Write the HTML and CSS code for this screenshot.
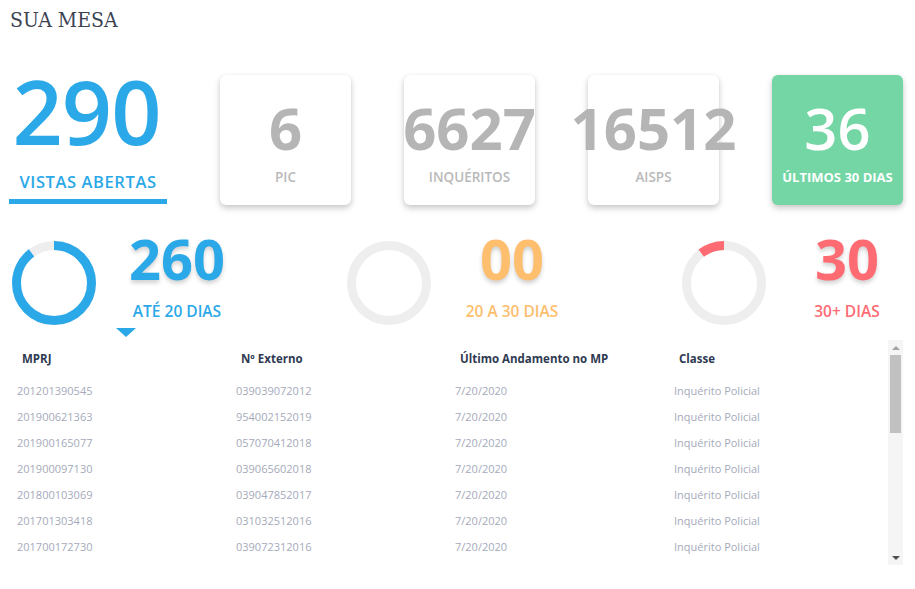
FILE: index.html
```html
<!DOCTYPE html>
<html lang="pt-BR">
<head>
<meta charset="utf-8">
<title>Sua Mesa</title>
<link rel="stylesheet" href="styles.css">
</head>
<body>
<div class="page">
  <h1 class="title">SUA MESA</h1>

  <div class="top">
    <div class="hero">
      <div class="hero-num">290</div>
      <div class="hero-label">VISTAS ABERTAS</div>
      <div class="hero-bar"></div>
    </div>
    <div class="cards">
      <div class="card"><div class="card-num">6</div><div class="card-label">PIC</div></div>
      <div class="card"><div class="card-num">6627</div><div class="card-label">INQUÉRITOS</div></div>
      <div class="card"><div class="card-num">16512</div><div class="card-label">AISPS</div></div>
      <div class="card card-green"><div class="card-num">36</div><div class="card-label">ÚLTIMOS 30 DIAS</div></div>
    </div>
  </div>

  <div class="stats">
    <div class="stat stat-blue">
      <svg class="donut" viewBox="0 0 84 84" width="84" height="84">
        <circle class="ring-bg" cx="42" cy="42" r="37.5"/>
        <circle class="ring-val" cx="42" cy="42" r="37.5" stroke-dasharray="211.2 235.6" transform="rotate(-90 42 42)"/>
      </svg>
      <div class="stat-text">
        <div class="stat-num">260</div>
        <div class="stat-label">ATÉ 20 DIAS</div>
        <div class="stat-arrow"></div>
      </div>
    </div>
    <div class="stat stat-orange">
      <svg class="donut" viewBox="0 0 84 84" width="84" height="84">
        <circle class="ring-bg" cx="42" cy="42" r="37.5"/>
      </svg>
      <div class="stat-text">
        <div class="stat-num">00</div>
        <div class="stat-label">20 A 30 DIAS</div>
      </div>
    </div>
    <div class="stat stat-red">
      <svg class="donut" viewBox="0 0 84 84" width="84" height="84">
        <circle class="ring-bg" cx="42" cy="42" r="37.5"/>
        <circle class="ring-val" cx="42" cy="42" r="37.5" stroke-dasharray="24.4 235.6" transform="rotate(-127.3 42 42)"/>
      </svg>
      <div class="stat-text">
        <div class="stat-num">30</div>
        <div class="stat-label">30+ DIAS</div>
      </div>
    </div>
  </div>

  <div class="table-wrap">
    <div class="table">
      <div class="row head">
        <div class="cell">MPRJ</div><div class="cell">Nº Externo</div><div class="cell">Último Andamento no MP</div><div class="cell">Classe</div>
      </div>
      <div class="row"><div class="cell">201201390545</div><div class="cell">039039072012</div><div class="cell">7/20/2020</div><div class="cell">Inquérito Policial</div></div>
      <div class="row"><div class="cell">201900621363</div><div class="cell">954002152019</div><div class="cell">7/20/2020</div><div class="cell">Inquérito Policial</div></div>
      <div class="row"><div class="cell">201900165077</div><div class="cell">057070412018</div><div class="cell">7/20/2020</div><div class="cell">Inquérito Policial</div></div>
      <div class="row"><div class="cell">201900097130</div><div class="cell">039065602018</div><div class="cell">7/20/2020</div><div class="cell">Inquérito Policial</div></div>
      <div class="row"><div class="cell">201800103069</div><div class="cell">039047852017</div><div class="cell">7/20/2020</div><div class="cell">Inquérito Policial</div></div>
      <div class="row"><div class="cell">201701303418</div><div class="cell">031032512016</div><div class="cell">7/20/2020</div><div class="cell">Inquérito Policial</div></div>
      <div class="row"><div class="cell">201700172730</div><div class="cell">039072312016</div><div class="cell">7/20/2020</div><div class="cell">Inquérito Policial</div></div>
    </div>
    <div class="scrollbar" aria-hidden="true">
      <div class="sb-up"></div>
      <div class="sb-track"><div class="sb-thumb"></div></div>
      <div class="sb-down"></div>
    </div>
  </div>
</div>
</body>
</html>
```

FILE: styles.css
```css
* { box-sizing: border-box; }

html, body {
  margin: 0;
  padding: 0;
  background: #ffffff;
}

body {
  font-family: "Open Sans", "Noto Sans", sans-serif;
}

.page {
  width: 915px;
  height: 589px;
  overflow: hidden;
}

.title {
  margin: 0;
  padding: 7px 0 0 10px;
  height: 40px;
  font-family: "DejaVu Serif", "Liberation Serif", serif;
  font-stretch: condensed;
  font-weight: 400;
  font-size: 21px;
  line-height: 26px;
  color: #3b4252;
}

/* ---- top row ---- */
.top {
  display: flex;
  align-items: flex-start;
  margin-top: 27px;
  padding-left: 9px;
}

.hero {
  width: 158px;
  display: flex;
  flex-direction: column;
  align-items: center;
}

.hero-num {
  font-size: 88px;
  line-height: 88px;
  height: 88px;
  font-weight: 600;
  color: #2ba8e8;
  letter-spacing: -1px;
  margin-left: -3px;
}

.hero-label {
  margin-top: 17px;
  font-size: 16.5px;
  line-height: 20px;
  font-weight: 600;
  letter-spacing: 0.6px;
  color: #2ba8e8;
}

.hero-bar {
  margin-top: 7px;
  width: 158px;
  height: 5px;
  background: #2ba8e8;
}

.cards {
  display: flex;
  gap: 53px;
  margin-left: 53px;
  margin-top: 8px;
}

.card {
  width: 131px;
  height: 130px;
  border-radius: 6px;
  background: #ffffff;
  box-shadow: 0 3px 6px rgba(0, 0, 0, 0.22), 0 0 2px rgba(0, 0, 0, 0.06);
  display: flex;
  flex-direction: column;
  align-items: center;
  padding-top: 24px;
}

.card-num {
  font-size: 58px;
  line-height: 58px;
  height: 58px;
  font-weight: 700;
  color: #b5b5b5;
  white-space: nowrap;
}

.card-label {
  margin-top: 11px;
  font-size: 13.5px;
  line-height: 18px;
  font-weight: 600;
  color: #b9b9b9;
  white-space: nowrap;
}

.card-green {
  background: #73d6a4;
}

.card-green .card-num,
.card-green .card-label {
  color: #ffffff;
}

.card-green .card-num {
  font-weight: 600;
}

.card-green .card-label {
  font-size: 13px;
  font-weight: 700;
}

/* ---- stats row ---- */
.stats {
  display: flex;
  gap: 109px;
  margin-top: 25px;
  padding-left: 12px;
  height: 110px;
}

.stat {
  display: flex;
  align-items: flex-start;
  gap: 20px;
}

.donut {
  display: block;
  margin-top: 11px;
  flex: none;
}

.ring-bg {
  fill: none;
  stroke: #eeeeee;
  stroke-width: 9;
}

.ring-val {
  fill: none;
  stroke-width: 9;
}

.stat-blue .ring-val { stroke: #2ba8e8; }
.stat-red .ring-val { stroke: #fe6b73; }

.stat-text {
  width: 122px;
  display: flex;
  flex-direction: column;
  align-items: center;
}

.stat-num {
  font-size: 56px;
  line-height: 56px;
  height: 56px;
  font-weight: 700;
  text-shadow: 0 3px 4px rgba(0, 0, 0, 0.18);
}

.stat-label {
  margin-top: 16px;
  font-size: 15.5px;
  line-height: 18px;
  font-weight: 600;
  white-space: nowrap;
}

.stat-arrow {
  align-self: flex-start;
  margin-top: 8px;
  width: 0;
  height: 0;
  border-left: 10px solid transparent;
  border-right: 10px solid transparent;
  border-top: 9px solid #2ba8e8;
}

.stat-blue .stat-num, .stat-blue .stat-label { color: #2ba8e8; }
.stat-orange .stat-num, .stat-orange .stat-label { color: #fdbe6d; }
.stat-red .stat-num, .stat-red .stat-label { color: #fe6b73; }

/* ---- table ---- */
.table-wrap {
  display: flex;
  margin-left: 10px;
  width: 893px;
  height: 225px;
}

.table {
  flex: 1;
  overflow: hidden;
}

.row {
  display: grid;
  grid-template-columns: 219px 219px 219px 1fr;
  height: 26px;
  align-items: center;
}

.row .cell {
  padding-left: 7px;
  font-size: 11px;
  color: #a5aaba;
  white-space: nowrap;
}

.row.head {
  height: 37px;
}

.row.head .cell {
  padding-left: 12px;
  font-size: 11.5px;
  font-weight: 700;
  color: #2f3a52;
}

/* drawn scrollbar */
.scrollbar {
  width: 15px;
  flex: none;
  background: #f5f5f5;
  display: flex;
  flex-direction: column;
  align-items: center;
}

.sb-up,
.sb-down {
  height: 15px;
  width: 15px;
  display: flex;
  align-items: center;
  justify-content: center;
  flex: none;
}

.sb-up::before {
  content: "";
  border-left: 4px solid transparent;
  border-right: 4px solid transparent;
  border-bottom: 4px solid #a3a3a3;
}

.sb-down::before {
  content: "";
  border-left: 4px solid transparent;
  border-right: 4px solid transparent;
  border-top: 4px solid #505050;
}

.sb-track {
  flex: 1;
  width: 100%;
  display: flex;
  justify-content: center;
}

.sb-thumb {
  width: 11px;
  height: 78px;
  background: #c1c1c1;
}
```
